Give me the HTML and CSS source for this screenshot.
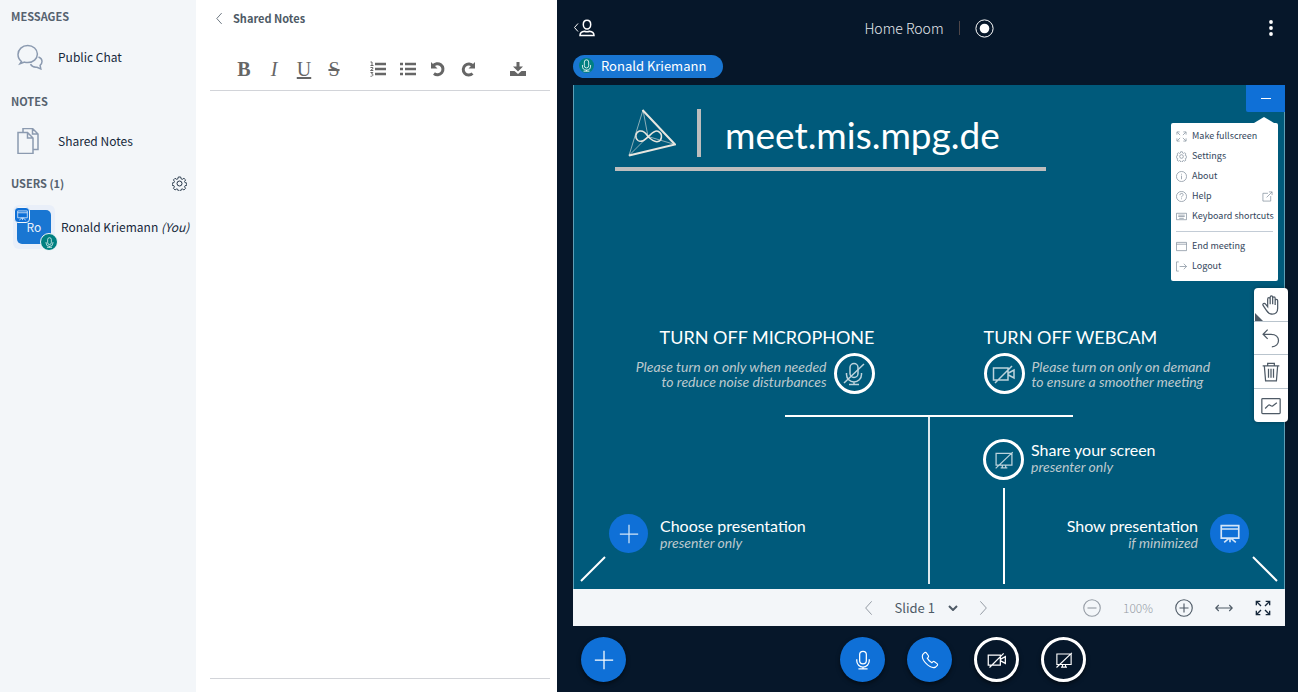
FILE: index.html
```
<!DOCTYPE html>
<html lang="en">
<head>
<meta charset="utf-8">
<title>Home Room</title>
<link rel="stylesheet" href="styles.css">
</head>
<body>
<svg class="sprite" aria-hidden="true">
  <symbol id="mic" viewBox="0 0 24 24"><rect x="8" y="1.500" width="8" height="15" rx="4"/><path d="M4.500 11v2a7.500 7.500 0 0 0 15 0v-2M12 20.500v2M6.500 22.500h11"/></symbol>
  <symbol id="mic-off" viewBox="0 0 24 24"><rect x="8" y="1.500" width="8" height="14" rx="4"/><path d="M4.500 11v1.500a7.500 7.500 0 0 0 15 0V11M12 20v2M7 22.500h10M2 21 22 2"/></symbol>
  <symbol id="cam-off" viewBox="0 0 24 24"><path d="M1.500 6h14.500v12H1.500zM16.500 11l5.500-3v8l-5.500-3M3 21 20 4"/></symbol>
  <symbol id="screen-off" viewBox="0 0 24 24"><path d="M2.500 4h19v14h-19zM8 21.500h8M10 18v3M14 18v3M2 22 22.500 2.500"/></symbol>
  <symbol id="plus" viewBox="0 0 24 24"><path d="M12 1v22M1 12h22"/></symbol>
  <symbol id="board" viewBox="0 0 24 24"><path d="M1.500 2h21v15h-21zM1.500 6h21M12 17v5M11 17l-6 5M13 17l6 5"/></symbol>
  <symbol id="left" viewBox="0 0 24 24"><path d="M16 2 7 12l9 10"/></symbol>
  <symbol id="right" viewBox="0 0 24 24"><path d="m8 2 9 10-9 10"/></symbol>
  <symbol id="gear" viewBox="0 0 24 24"><circle cx="12" cy="12" r="4"/><path d="M10 1.500h4l.7 3.200 2 .9 2.800-1.800 2.800 2.800-1.800 2.800.8 2 3 .6v4l-3 .7-.8 1.900 1.700 2.700-2.700 2.700-2.800-1.700-2 .8-.7 3h-4l-.7-3-2-.8-2.800 1.700-2.700-2.700 1.700-2.700-.8-1.900-3-.7v-4l3-.6.8-2-1.700-2.800 2.700-2.800 2.800 1.800 2-.9z" transform="matrix(.95 0 0 .92 .6 .2)"/></symbol>
  <symbol id="expand" viewBox="0 0 24 24"><path d="m9 9-6-6M15 9l6-6M9 15l-6 6M15 15l6 6M2 8V2h6M16 2h6v6M2 16v6h6M16 22h6v-6"/></symbol>
</svg>
<div class="app">
  <nav class="sidebar">
    <h2 class="label">MESSAGES</h2>
    <button class="entry chat"><svg class="icon entry-icon" viewBox="0 0 26 26"><path d="M4.500 17.500C2 15.500 1 13.300 1 10.500 1 5.500 5.300 1.500 10.700 1.500s9.700 3.700 9.700 8.500-4.300 8.600-9.700 8.600c-1.200 0-2.200-.1-3.200-.5L3 19.700zM21.500 13c2 .8 3.500 2.500 3.500 4.600 0 1.500-.7 2.800-1.900 3.700l.7 3.600-3.800-1.700c-3.300.3-5.500-1-6.500-3"/></svg>Public Chat</button>
    <h2 class="label">NOTES</h2>
    <button class="entry notes-entry"><svg class="icon entry-icon" viewBox="0 0 26 26"><path d="M1 4.500h9.500l5.500 5.500v15.500H1zM10.500 4.500V10H16M6 4V.5h9.500l5.500 5.500v15.500h-4.500M15.500.5V6H21"/></svg>Shared Notes</button>
    <div class="users-head"><h2 class="label">USERS (1)</h2><button class="plain gear" aria-label="Manage users"><svg class="icon i15"><use href="#gear"/></svg></button></div>
    <button class="user">
      <span class="halo"><span class="avatar">Ro<span class="badge presenter"><svg class="icon i11"><use href="#board"/></svg></span><span class="badge voice"><svg class="icon i11"><use href="#mic"/></svg></span></span></span>
      <span class="user-name">Ronald Kriemann <em>(You)</em></span>
    </button>
  </nav>

  <section class="notes">
    <button class="plain back"><svg class="icon i13"><use href="#left"/></svg>Shared Notes</button>
    <div class="editor">
      <div class="tools">
        <button class="tool" aria-label="Bold"><b>B</b></button>
        <button class="tool" aria-label="Italic"><i>I</i></button>
        <button class="tool" aria-label="Underline"><u>U</u></button>
        <button class="tool" aria-label="Strikethrough"><s>S</s></button>
        <button class="tool group" aria-label="Ordered list"><svg class="icon bold i16" viewBox="0 0 16 16"><path d="M5 3h11M5 8h11M5 13h11"/><path class="fine" d="M.5 1H2v3.500M.5 4.500h3M.5 6.500h2.300v1.300L.5 9.500h2.800M.5 11.500h2.300L1.600 13c2.300 0 1.700 2.500-1.100 2.300"/></svg></button>
        <button class="tool" aria-label="Bullet list"><svg class="icon bold i16" viewBox="0 0 16 16"><path d="M5 3h11M5 8h11M5 13h11M0 3h3M0 8h3M0 13h3"/></svg></button>
        <button class="tool" aria-label="Undo"><svg class="icon arc i16" viewBox="0 0 16 16"><path d="M3 5a5.500 5.500 0 1 1 1 7.500"/><path class="solid" d="M1 1v6.500h6.500z"/></svg></button>
        <button class="tool" aria-label="Redo"><svg class="icon arc i16" viewBox="0 0 16 16"><path d="M13 5a5.500 5.500 0 1 0-.5 7.500"/><path class="solid" d="M15 1v6.500H8.500z"/></svg></button>
        <button class="tool last" aria-label="Export"><svg class="i16" viewBox="0 0 16 16"><path class="solid" d="M6.500 1h3v4.500h3.500L8 10.500 3 5.500h3.500zM0 10h4.500L8 13l3.500-3H16v5H0z"/></svg></button>
      </div>
      <div class="pad" role="textbox" aria-label="Shared Notes" tabindex="0"></div>
    </div>
  </section>

  <main class="meeting">
    <header class="top">
      <button class="plain roster" aria-label="User list"><svg class="icon" width="22" height="18" viewBox="0 0 22 18"><path class="back-mark" d="M5 4.500 1.500 8.500 5 12.500"/><path d="M14 1.200c2.200 0 3.700 1.700 3.700 4.300S16 10 14 10s-3.700-2-3.700-4.500S11.800 1.200 14 1.200zM7 16.500h14c0-3-1.800-4-4.500-4.300-1.800.8-3.200.8-5 0C8.800 12.500 7 13.500 7 16.500z"/></svg></button>
      <div class="room"><h1 class="room-name">Home Room</h1><span class="divider"></span><button class="plain" aria-label="Record"><svg class="icon record" width="19" height="19" viewBox="0 0 19 19"><circle cx="9.500" cy="9.500" r="8.600"/><circle class="solid" cx="9.500" cy="9.500" r="4.800"/></svg></button></div>
      <button class="plain options" aria-label="Options"><svg width="6" height="18" viewBox="0 0 6 18"><g class="solid"><circle cx="3" cy="3" r="1.900"/><circle cx="3" cy="9" r="1.900"/><circle cx="3" cy="15" r="1.900"/></g></svg></button>
    </header>
    <button class="talking"><span class="talk-icon"><svg class="icon i13"><use href="#mic"/></svg></span>Ronald Kriemann</button>

    <div class="stage">
      <article class="slide">
        <div class="brand">
          <div class="brand-row">
            <svg class="logo" viewBox="0 0 48 48"><path class="thick" d="M14.500 1 47 35.500 1 46.500"/><path class="thin" d="M15 1 1 46.500 20 27.500 15 1M20 27.500l27 8"/><path d="M20 27.500c-3-5-6-6-8.500-5.500-4 1-5 7-1.500 9.500 4.500 3 8-2 10.500-4s6-7 10-5c4.500 2.500 3.500 9-.5 10-4 1-7-2-10-5z"/></svg>
            <span class="brand-bar"></span>
            <span class="brand-name">meet.mis.mpg.de</span>
          </div>
        </div>
        <div class="advice">
          <section class="tip tip-left">
            <h3 class="tip-title">TURN OFF MICROPHONE</h3>
            <div class="tip-body"><p class="hint">Please turn on only when needed<br>to reduce noise disturbances</p><span class="ring"><svg class="icon i24"><use href="#mic-off"/></svg></span></div>
          </section>
          <section class="tip">
            <h3 class="tip-title">TURN OFF WEBCAM</h3>
            <div class="tip-body"><span class="ring"><svg class="icon i24"><use href="#cam-off"/></svg></span><p class="hint">Please turn on only on demand<br>to ensure a smoother meeting</p></div>
          </section>
        </div>
        <div class="crossbar"></div>
        <div class="lower">
          <div class="choose">
            <div class="action-tip"><span class="disc"><svg class="icon i20"><use href="#plus"/></svg></span><div><h4 class="action-title">Choose presentation</h4><p class="hint">presenter only</p></div></div>
            <svg class="icon pointer" viewBox="0 0 26 26"><path d="M25 1 1 25"/></svg>
          </div>
          <span class="stem"></span>
          <div class="right-side">
            <div class="share-line"><span class="ring"><svg class="icon i20"><use href="#screen-off"/></svg></span><span class="leader"></span></div>
            <div class="right-text">
              <div class="share-text"><h4 class="action-title">Share your screen</h4><p class="hint">presenter only</p></div>
              <div class="show">
                <div class="action-tip"><div class="show-text"><h4 class="action-title">Show presentation</h4><p class="hint">if minimized</p></div><span class="disc"><svg class="icon i20 board-icon"><use href="#board"/></svg></span></div>
                <svg class="icon pointer" viewBox="0 0 26 26"><path d="m1 1 24 24"/></svg>
              </div>
            </div>
          </div>
        </div>
      </article>
      <button class="minimize" aria-label="Minimize presentation"><span class="dash"></span></button>
      <ul class="menu">
        <li class="menu-item"><svg class="icon i11"><use href="#expand"/></svg>Make fullscreen</li>
        <li class="menu-item"><svg class="icon i11"><use href="#gear"/></svg>Settings</li>
        <li class="menu-item"><svg class="icon i11" viewBox="0 0 24 24"><circle cx="12" cy="12" r="11"/><path d="M12 10v8M12 6v2"/></svg>About</li>
        <li class="menu-item"><svg class="icon i11" viewBox="0 0 24 24"><circle cx="12" cy="12" r="11"/><path d="M8.500 9c0-5 7-5 7-1 0 3-3.500 3-3.500 6M12 16v2"/></svg>Help<svg class="icon i11 external" viewBox="0 0 24 24"><path d="M13 5H2v17h17V11M10 14 22 2M15 2h7v7"/></svg></li>
        <li class="menu-item"><svg class="icon i11" viewBox="0 0 24 24"><path d="M1 5h22v14H1zM5 9h14M5 12h14M7 16h10"/></svg>Keyboard shortcuts</li>
        <li class="menu-item separated"><svg class="icon i11" viewBox="0 0 24 24"><path d="M1 3h22v18H1zM1 7h22"/></svg>End meeting</li>
        <li class="menu-item"><svg class="icon i11" viewBox="0 0 24 24"><path d="M6 2H1v20h5M8 12h15M17 6l6 6-6 6"/></svg>Logout</li>
      </ul>
      <div class="whiteboard">
        <button class="wb corner" aria-label="Pan"><svg class="icon i20" viewBox="0 0 24 24"><path d="M8 14V5c0-2.500 3-2.500 3 0v6V3c0-2.500 3-2.500 3 0v8V4c0-2.500 3-2.500 3 0v8-5c0-2.500 3-2.500 3 0v9c0 4-2 7-6.500 7-4 0-5.500-2-7-4.500l-4-6c-1-2 1.500-3.500 3-1.500z"/></svg></button>
        <button class="wb undo" aria-label="Undo annotation"><svg class="icon i20" viewBox="0 0 24 24"><path d="M8 2 2.500 7.500 8 13M2.500 7.500H12c6 0 9 3.500 9 7.500s-3 7.500-8 7.500"/></svg></button>
        <button class="wb" aria-label="Clear annotations"><svg class="icon i20" viewBox="0 0 24 24"><path d="M2 4.500h20M8 4.500V1.500h8v3M4 4.500 5.500 22.500h13L20 4.500M9 8v11M12 8v11M15 8v11"/></svg></button>
        <button class="wb" aria-label="Multi-user whiteboard"><svg class="icon i20" viewBox="0 0 24 24"><rect x="1" y="3" width="22" height="18" rx="1"/><path d="m5 15 4-4c1.500-1.500 3 2 5 1l5-4"/></svg></button>
      </div>
    </div>
    <div class="slide-bar">
      <div class="pager">
        <button class="plain muted" aria-label="Previous slide"><svg class="icon i16"><use href="#left"/></svg></button>
        <label class="picker"><select class="picker-select" aria-label="Slide"><option>Slide 1</option></select><svg class="icon chevron" viewBox="0 0 10 6"><path d="m1 1 4 4 4-4"/></svg></label>
        <button class="plain muted" aria-label="Next slide"><svg class="icon i16"><use href="#right"/></svg></button>
      </div>
      <div class="zoom">
        <button class="plain muted" aria-label="Zoom out"><svg class="icon i18" viewBox="0 0 24 24"><circle cx="12" cy="12" r="11"/><path d="M6 12h12"/></svg></button>
        <span class="percent">100%</span>
        <button class="plain" aria-label="Zoom in"><svg class="icon i18" viewBox="0 0 24 24"><circle cx="12" cy="12" r="11"/><path d="M6 12h12M12 6v12"/></svg></button>
        <button class="plain" aria-label="Fit to width"><svg class="icon i18" viewBox="0 0 24 24"><path d="M1 12h22M5 8l-4 4 4 4M19 8l4 4-4 4"/></svg></button>
        <button class="plain strong" aria-label="Fullscreen"><svg class="icon i16"><use href="#expand"/></svg></button>
      </div>
    </div>
    <footer class="actions">
      <button class="round" aria-label="Actions"><svg class="icon i20"><use href="#plus"/></svg></button>
      <div class="media">
        <button class="round" aria-label="Mute"><svg class="icon i20"><use href="#mic"/></svg></button>
        <button class="round" aria-label="Leave audio"><svg class="icon i18" viewBox="0 0 24 24"><path d="m2.500 4.500 2-2c.8-.8 1.900-.8 2.600.1l2.600 3.400c.6.800.4 1.700-.2 2.400L8.400 9.500c1.200 2.400 3.700 4.900 6.100 6.100l1.100-1.100c.7-.6 1.600-.8 2.400-.2l3.400 2.600c.9.700.9 1.800.1 2.600l-2 2C12.500 25 -1 11.500 2.500 4.500z"/></svg></button>
        <button class="round ghost" aria-label="Share webcam"><svg class="icon i20"><use href="#cam-off"/></svg></button>
        <button class="round ghost" aria-label="Share screen"><svg class="icon i18"><use href="#screen-off"/></svg></button>
      </div>
    </footer>
  </main>
</div>
</body>
</html>
```
FILE: styles.css
```
* { box-sizing: border-box; }
body { margin: 0; font-family: "Noto Sans CJK SC", "Noto Sans", sans-serif; font-size: 12px; line-height: 20px; color: #16283b; }
h1, h2, h3, h4, p, ul { margin: 0; padding: 0; font-weight: 400; }
button { font: inherit; color: inherit; background: none; border: 0; padding: 0; cursor: pointer; }
svg { display: block; flex: none; }
.sprite { position: absolute; width: 0; height: 0; }
.icon { fill: none; stroke: currentColor; stroke-width: 1.500; }
.solid { fill: currentColor; stroke: none; }
.i11 { width: 11px; height: 11px; }
.i13 { width: 13px; height: 13px; }
.i15 { width: 15px; height: 15px; }
.i16 { width: 16px; height: 16px; }
.i18 { width: 18px; height: 18px; }
.i20 { width: 20px; height: 20px; }
.i24 { width: 24px; height: 24px; }
.plain { display: flex; align-items: center; }

.app { display: grid; grid-template-columns: 196px 361px minmax(0, 1fr); min-height: 100vh; }

/* Sidebar */
.sidebar { background: #f3f6f9; padding: 6px 7px 0 11px; }
.label { font-size: 11px; font-weight: 700; color: #56626f; }
.entry { display: flex; align-items: center; gap: 15px; width: 100%; height: 40px; margin: 11px 0 14px; padding-left: 6px; }
.notes-entry { margin: 10px 0 12px; }
.entry-icon { width: 26px; height: 26px; color: #8b9ab0; }
.users-head { display: flex; justify-content: space-between; align-items: center; }
.gear { margin-right: 2px; }
.user { display: flex; align-items: center; gap: 6px; width: 100%; margin-top: 12px; padding-left: 2px; white-space: nowrap; }
.halo { padding: 5px 4px; border-radius: 6px; background: #e9eff9; }
.avatar { position: relative; display: flex; align-items: center; justify-content: center; width: 34px; height: 34px; border-radius: 5px; background: #1976d2; color: #e8f1fb; font-size: 12px; }
.badge { position: absolute; display: grid; place-items: center; color: #fff; border: 1px solid #f3f6f9; }
.presenter { left: -3px; top: -3px; width: 16px; height: 16px; border-radius: 4px; background: #0f70d7; }
.voice { right: -7px; bottom: -7px; width: 18px; height: 18px; border-radius: 50%; background: #008081; }

/* Shared notes */
.notes { display: flex; flex-direction: column; background: #fff; padding: 8px 7px 13px 14px; }
.back { gap: 7px; padding-left: 3px; font-size: 11px; font-weight: 700; color: #4e5a66; }
.editor { flex: 1; display: flex; flex-direction: column; margin-top: 20px; border-bottom: 1px solid #d2d4d9; }
.tools { display: flex; height: 43px; padding-left: 19px; align-items: center; border-bottom: 1px solid #d2d4d9; color: #666; font-family: "Liberation Serif", serif; font-size: 20px; }
.tool { display: flex; justify-content: center; width: 30px; }
.group { margin-left: 14px; }
.last { margin-left: 20px; }
.bold { stroke-width: 2.500; }
.fine { stroke-width: 1; }
.arc { stroke-width: 3; }
.pad { flex: 1; outline: 0; }

/* Meeting area */
.meeting { display: flex; flex-direction: column; background: #06172a; color: #fff; padding: 0 13px 0 16px; min-width: 0; }
.top { display: grid; grid-template-columns: 1fr auto 1fr; align-items: center; height: 55px; padding-top: 1px; }
.back-mark { stroke-width: 1; }
.room { display: flex; align-items: center; gap: 15px; }
.room-name { font-size: 14px; font-weight: 300; color: #e3e7ec; }
.divider { width: 1px; height: 14px; background: #4e4648; }
.record { stroke-width: 1; }
.options { justify-self: end; margin-right: 11px; }
.talking { display: flex; align-items: center; align-self: flex-start; gap: 7px; height: 23px; padding: 0 17px 2px 6px; border-radius: 12px; background: #1976d2; font-size: 13px; }
.talk-icon { display: grid; place-items: center; width: 15px; height: 15px; border-radius: 50%; background: #008081; }

.stage { position: relative; flex: 1; display: flex; margin-top: 7px; }
.slide { flex: 1; display: flex; flex-direction: column; background: #005a7b; border: solid #5d9eb5; border-width: 0 1px; font-family: Lato, sans-serif; }
.brand { width: 431px; margin: 24px 0 auto 41px; border-bottom: 4px solid #bdbdbd; padding-bottom: 10px; }
.brand-row { display: flex; align-items: center; height: 48px; padding-left: 13px; }
.logo { width: 48px; height: 48px; fill: none; stroke: #e8e6df; stroke-width: 1.500; }
.thick { stroke-width: 2; }
.thin { stroke-width: 1; opacity: .6; }
.brand-bar { width: 4px; height: 48px; margin: 0 24px 0 21px; background: #bdbdbd; }
.brand-name { font-size: 37px; line-height: 48px; padding-top: 3px; }
.advice { display: grid; grid-template-columns: 1fr 1fr; gap: 109px; margin-bottom: 21px; }
.tip-left { display: flex; flex-direction: column; align-items: flex-end; text-align: right; }
.tip-title { font-size: 18px; line-height: 26px; white-space: nowrap; }
.tip-body { display: flex; align-items: center; gap: 7px; margin-top: 3px; }
.hint { font-size: 14px; line-height: 15px; font-style: italic; color: #bdc9ce; white-space: nowrap; }
.ring { display: grid; place-items: center; flex: none; width: 41px; height: 41px; border: 3px solid #fff; border-radius: 50%; color: #bcd3dc; }
.crossbar { align-self: center; width: 288px; height: 2px; background: #fff; }
.lower { display: grid; grid-template-columns: 1fr 2px 1fr; height: 172px; }
.stem { background: #dbe8ed; margin-bottom: 5px; }
.choose { display: flex; flex-direction: column; justify-content: flex-end; padding: 0 0 7px 6px; }
.choose .action-tip { padding-left: 29px; }
.action-tip { display: flex; align-items: center; gap: 12px; }
.disc { display: grid; place-items: center; flex: none; width: 39px; height: 39px; border-radius: 50%; background: #0f70d7; color: #d3e5f8; }
.board-icon { stroke-width: 2; }
.action-title { font-size: 16px; line-height: 18px; white-space: nowrap; }
.pointer { width: 26px; height: 26px; margin-top: 3px; stroke-width: 2; }
.right-side { display: flex; gap: 7px; padding: 22px 6px 0 53px; }
.share-line { display: flex; flex-direction: column; align-items: center; gap: 8px; padding-bottom: 5px; }
.leader { flex: 1; width: 2px; background: #fff; }
.right-text { flex: 1; display: flex; flex-direction: column; justify-content: space-between; padding-bottom: 7px; }
.share-text { padding-top: 2px; }
.show { display: flex; flex-direction: column; align-items: flex-end; }
.show .action-tip { padding-right: 29px; }
.show-text { text-align: right; }

.minimize { position: absolute; top: 0; right: 0; display: grid; place-items: center; width: 39px; height: 27px; background: #0f70d7; border-radius: 0 0 0 2px; }
.dash { width: 10px; height: 1px; background: #fff; }
.menu { position: absolute; top: 38px; right: 7px; width: 107px; padding: 3px 5px 5px; background: #fff; border-radius: 2px; color: #33465c; list-style: none; font-size: 9px; }
.menu::before { content: ""; position: absolute; top: -6px; right: 4px; border: solid transparent; border-width: 0 10px 6px; border-bottom-color: #fff; }
.menu-item { display: flex; align-items: center; gap: 5px; line-height: 20px; height: 20px; white-space: nowrap; }
.menu-item .icon { color: #7a8896; }
.external { margin-left: auto; }
.separated { height: 25px; margin-top: 5px; padding-top: 4px; border-top: 1px solid #c3ccd6; }
.whiteboard { position: absolute; top: 203px; right: -3px; width: 34px; display: flex; flex-direction: column; background: #fff; border-radius: 4px; color: #4e5a66; overflow: hidden; box-shadow: 0 0 4px #0005; }
.wb { position: relative; display: grid; place-items: center; height: 34px; border-bottom: 1px solid #b9c4cd; }
.undo { height: 33px; }
.wb:last-child { border-bottom: 0; height: 33px; }
.corner::after { content: ""; position: absolute; left: 1px; bottom: 0; border: 4px solid; border-color: transparent transparent #4e5a66 #4e5a66; }

.slide-bar { display: grid; grid-template-columns: 1fr auto 1fr; align-items: center; height: 37px; background: #f3f6f9; color: #4e5a66; }
.pager { grid-column: 2; display: flex; align-items: center; gap: 13px; padding-right: 7px; }
.muted { color: #959ca5; }
.picker { position: relative; display: flex; align-items: center; padding: 0 5px; }
.picker-select { appearance: none; border: 0; background: none; font: inherit; font-size: 13px; color: inherit; width: 62px; padding: 0; }
.chevron { position: absolute; right: 4px; width: 10px; height: 6px; stroke-width: 2; pointer-events: none; }
.zoom { display: flex; align-items: center; justify-content: flex-end; gap: 22px; padding-right: 14px; }
.percent { font-size: 12px; font-weight: 300; color: #959ca5; }
.strong { color: #16283b; }
.strong .icon { stroke-width: 2; }
.actions { display: flex; align-items: center; height: 66px; padding: 1px 0 0 8px; margin-right: -13px; }
.media { flex: 1; display: flex; justify-content: center; gap: 22px; padding-left: 2px; }
.round { display: grid; place-items: center; width: 45px; height: 45px; border-radius: 50%; background: #0f70d7; box-shadow: 0 2px 4px #0008; }
.ghost { background: transparent; border: 3px solid #fff; }
```
